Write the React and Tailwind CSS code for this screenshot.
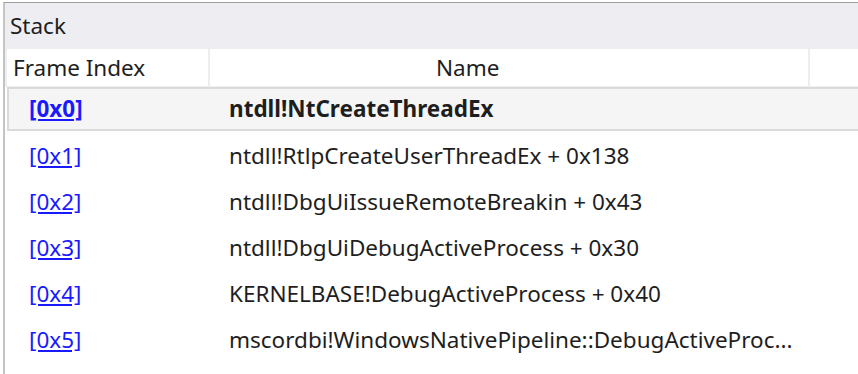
export default function App() {
  const rows = [
    ["[0x1]", "ntdll!RtlpCreateUserThreadEx + 0x138"],
    ["[0x2]", "ntdll!DbgUiIssueRemoteBreakin + 0x43"],
    ["[0x3]", "ntdll!DbgUiDebugActiveProcess + 0x30"],
    ["[0x4]", "KERNELBASE!DebugActiveProcess + 0x40"],
    ["[0x5]", "mscordbi!WindowsNativePipeline::DebugActiveProc..."],
  ];
  return (
    <div className="w-[858px] h-[374px] bg-white overflow-hidden pt-[2px] pl-[3px] text-[#1e1e1e]" style={{ fontFamily: '"Noto Sans", sans-serif' }}>
      <div className="h-full border-t border-t-[#a0a0a0] border-l-2 border-l-[#c4c4c4] bg-white">
        <div className="h-[46px] bg-[#eeeef2] flex items-center pl-[5px] text-[22.5px]">Stack</div>
        <div className="flex h-[37px] border-l-2 border-[#eeeef2] text-[22.5px]">
          <div className="w-[201px] bg-white flex items-center pl-[6px]">Frame Index</div>
          <div className="w-[2px] bg-[#eeeef2]" />
          <div className="w-[598px] bg-white flex items-center pl-[226px]">Name</div>
          <div className="w-[2px] bg-[#eeeef2]" />
          <div className="flex-1 bg-white" />
        </div>
        <div className="h-[1px] bg-[#eeeef2]" />
        <div className="h-[46px]">
          <div className="h-[44px] ml-[2px] border-2 border-r-0 border-[#dadada] bg-[#f5f5f5] flex items-center text-[22.5px] font-bold">
            <div className="w-[220px] pl-[20px]"><span className="text-[#1a1aff] underline">[0x0]</span></div>
            <div>ntdll!NtCreateThreadEx</div>
          </div>
        </div>
        {rows.map(([a, b]) => (
          <div key={a} className="h-[46px] flex items-center text-[22.5px] pl-[4px]">
            <div className="w-[220px] pl-[20px]"><span className="text-[#1a1aff] underline">{a}</span></div>
            <div className="whitespace-nowrap">{b}</div>
          </div>
        ))}
      </div>
    </div>
  );
}
